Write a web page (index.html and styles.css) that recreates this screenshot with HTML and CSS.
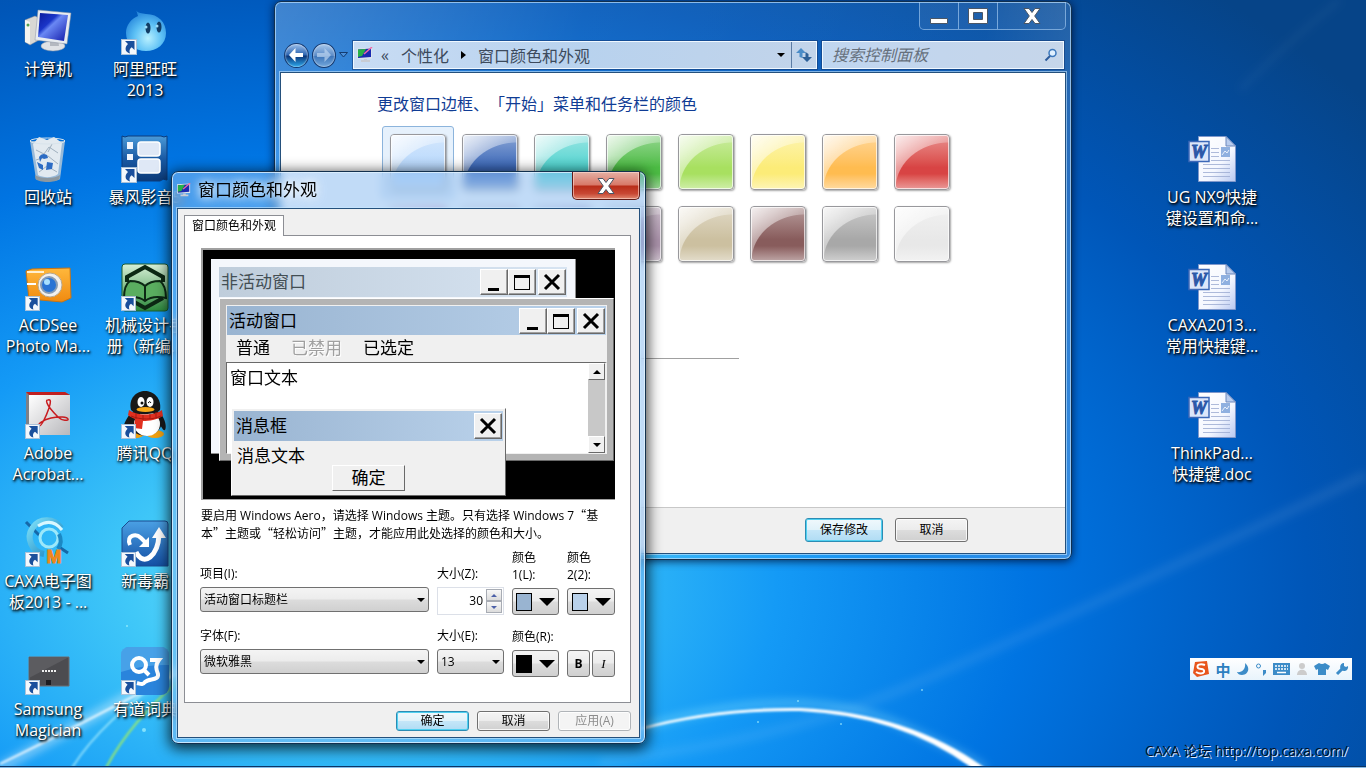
FILE: index.html
```html
<!DOCTYPE html>
<html lang="zh-CN">
<head>
    <meta charset="UTF-8">
    <meta name="viewport" content="width=device-width, initial-scale=1.0">
    <title>窗口颜色和外观</title>
    <link rel="stylesheet" href="styles.css">
</head>
<body>
    <svg class="defs" width="0" height="0" aria-hidden="true">
        <defs>
            <linearGradient id="gScreen" x1="0" y1="0" x2="1" y2="1">
                <stop offset="0" stop-color="#0a1a9c"/><stop offset=".35" stop-color="#1a35c8"/><stop offset=".45" stop-color="#6a88f4"/><stop offset="1" stop-color="#1018a8"/>
            </linearGradient>
            <radialGradient id="gDrop" cx=".55" cy=".7" r=".7">
                <stop offset="0" stop-color="#b8f0ff"/><stop offset=".5" stop-color="#5cc0f5"/><stop offset="1" stop-color="#1f7fd8"/>
            </radialGradient>
            <linearGradient id="gBlue" x1="0" y1="0" x2="0" y2="1">
                <stop offset="0" stop-color="#4aa0e4"/><stop offset="1" stop-color="#1450a4"/>
            </linearGradient>
            <linearGradient id="gFilm" x1="0" y1="0" x2="0" y2="1">
                <stop offset="0" stop-color="#4a9ad8"/><stop offset=".5" stop-color="#1a5aa4"/><stop offset="1" stop-color="#0c3a78"/>
            </linearGradient>
            <linearGradient id="gBook" x1="0" y1="0" x2="0" y2="1">
                <stop offset="0" stop-color="#d8f0d8"/><stop offset="1" stop-color="#2c8a3c"/>
            </linearGradient>
            <linearGradient id="gOrange" x1="0" y1="0" x2="0" y2="1">
                <stop offset="0" stop-color="#ffb83c"/><stop offset="1" stop-color="#f08a10"/>
            </linearGradient>
            <linearGradient id="gPaper" x1="0" y1="0" x2="1" y2="1">
                <stop offset="0" stop-color="#ffffff"/><stop offset=".6" stop-color="#f4f7ff"/><stop offset="1" stop-color="#b8c8f0"/>
            </linearGradient>
            <linearGradient id="gGrey" x1="0" y1="0" x2="1" y2="1">
                <stop offset="0" stop-color="#ffffff"/><stop offset="1" stop-color="#b8b8bc"/>
            </linearGradient>
            <linearGradient id="gCaxa" x1="0" y1="0" x2="1" y2="1">
                <stop offset="0" stop-color="#7ee0f8"/><stop offset="1" stop-color="#1080c0"/>
            </linearGradient>
            <symbol id="arrow" viewBox="0 0 16 16">
                <rect x=".5" y=".5" width="15" height="15" fill="#f4f8fc" stroke="#a8c0d8"/>
                <path d="M4 2h9.500v9l-2.800-2.800C8.500 9.500 8 12 9 14.500 3.500 13 3.500 8 7 5z" fill="#1a4f9c"/>
            </symbol>
            <symbol id="monitor" viewBox="0 0 16 16">
                <path d="M0 1.500L15 .5v11L0 12z" fill="#dce4ec"/>
                <path d="M1 2.500l13-1V10L1 11z" fill="#1a2ab0"/>
                <path d="M1 2.500l8-.5L5 9l-4 1z" fill="#28b048"/>
                <path d="M15 0L7 7" stroke="#f06aa8" stroke-width="1.500"/>
                <path d="M7 12h3v1h3v2H4v-2h3z" fill="#c8ccd4"/>
            </symbol>
            <symbol id="cross" viewBox="0 0 20 18">
                <path d="M2 1.500h5l3 4 3-4h5L12.700 9l5.300 7.500h-5l-3-4-3 4H2L7.300 9z" fill="#fff" stroke="#4a5666" stroke-width="1"/>
            </symbol>
            <symbol id="word" viewBox="0 0 48 48">
                <path d="M10.500.500H38l9.500 9.500v35.500h-37z" fill="url(#gPaper)" stroke="#7f98cc"/>
                <path d="M38 .5v9.500h9.500z" fill="#b8ccee" stroke="#6c88bc"/>
                <path d="M23 12.500h8M23 16.500h8M23 20.500h8M23 24.500h19M15 28.500h27M15 32.500h27M15 36.500h27M15 40.500h27" stroke="#9aaad0" stroke-width=".8"/>
                <rect x="33" y="11" width="9" height="10" fill="#8fb0e0"/>
                <path d="M34 19l3-4 2 2 2-3" stroke="#e8f0fc" fill="none"/>
                <rect x="1" y="5.500" width="20" height="20" fill="#dce6fa" stroke="#3c68b8" stroke-width="1.500"/>
                <text x="11" y="22" class="word-letter">W</text>
            </symbol>
        </defs>
    </svg>

    <div class="desktop">
        <svg class="wallpaper" viewBox="0 0 1366 768" preserveAspectRatio="none" aria-hidden="true">
            <defs>
                <filter id="soft" x="-20%" y="-50%" width="140%" height="200%"><feGaussianBlur stdDeviation="4"/></filter>
                <filter id="edge"><feGaussianBlur stdDeviation="1"/></filter>
            </defs>
            <g fill="none" filter="url(#soft)">
                <path d="M600 762Q780 740 900 690T1366 475" stroke="#fff" stroke-opacity=".08" stroke-width="10"/>
                <path d="M640 728Q800 680 900 725T980 770" stroke="#bff" stroke-opacity=".3" stroke-width="7"/>
                <path d="M1240 90Q1290 40 1340 0" stroke="#fff" stroke-opacity=".04" stroke-width="6"/>
                <path d="M0 768L180 668" stroke="#fff" stroke-opacity=".4" stroke-width="10"/>
            </g>
            <g filter="url(#edge)">
                <path d="M640 729Q715 709 800 710 905 715 976 770H986Q910 714 800 709 715 708 640 729z" fill="#fff" stroke="#fff" stroke-width="2"/>
                <path d="M0 764Q70 730 180 672" fill="none" stroke="#fff" stroke-opacity=".8" stroke-width="2"/>
                <path d="M72 768Q100 722 175 670" fill="none" stroke="#cff" stroke-opacity=".6" stroke-width="2"/>
                <path d="M106 768Q130 722 180 680" fill="none" stroke="#a4f060" stroke-opacity=".9" stroke-width="2"/>
            </g>
            <g fill="#bff" fill-opacity=".6">
                <circle cx="922" cy="690" r="1"/><circle cx="798" cy="701" r="1"/><circle cx="841" cy="724" r="1"/><circle cx="758" cy="722" r="1"/><circle cx="127" cy="626" r="1"/><circle cx="144" cy="730" r="2"/>
            </g>
        </svg>

        <nav class="icons icons-left">
            <a class="shortcut" href="#">
                <svg viewBox="0 0 48 48">
                    <path d="M1 12l10-4 4 2v22l-9 5-5-3z" fill="#d8d8d4" stroke="#8c9098" stroke-width=".5"/>
                    <path d="M1 12l5 2v22l-5-2z" fill="#f4f4f0"/><circle cx="4" cy="17" r="1.500" fill="#50a050"/>
                    <ellipse cx="29" cy="38" rx="12" ry="5" fill="#e0e2e6" stroke="#9098a4" stroke-width=".5"/>
                    <path d="M26 30h8l1 8h-9z" fill="#b4b8c0"/>
                    <path d="M14 2l33 3-4 31-32-4z" fill="#e8ecf0" stroke="#8890a0" stroke-width=".5"/>
                    <path d="M16 5l28 2-4 26-26-4z" fill="url(#gScreen)"/>
                </svg>
                <span>计算机</span>
            </a>
            <a class="shortcut" href="#">
                <svg viewBox="0 0 48 48">
                    <path d="M14 1c3 5 7 4 11 5 13 0 20 9 20 19 0 11-9 18-20 18S5 36 5 25c0-8 5-14 12-17-1-3-1-5-3-7z" fill="url(#gDrop)"/>
                    <ellipse cx="27" cy="20" rx="2.500" ry="5.500" fill="#123c64"/><ellipse cx="38" cy="19" rx="2.500" ry="5.500" fill="#123c64"/>
                    <circle cx="25" cy="19" r="1.500" fill="#9cdcf8"/><circle cx="36" cy="18" r="1.500" fill="#9cdcf8"/>
                    <use href="#arrow" x="0" y="31" width="16" height="16"/>
                </svg>
                <span>阿里旺旺<br>2013</span>
            </a>
            <a class="shortcut" href="#">
                <svg viewBox="0 0 48 48">
                    <path d="M6 5h35l-5 38c-3 3-20 3-24 0z" fill="#b4c8d8" fill-opacity=".85"/>
                    <path d="M9 8l6-7 8 3 7-3 8 6-4 31c-5 4-15 4-20 1z" fill="#e2eaf0"/>
                    <path d="M12 14l8 4 5-7 9 6M12 24l12-4 10 8M15 36l8-6 10 6M28 8l-4 8" stroke="#a0b0be" fill="none"/>
                    <path d="M15 21q3-5 8-2l1 3-4 1-2-1-2 4zM23 26l6 1-1 6-6 1zM13 26l6 3v5l-4-2z" fill="#2c6cc4"/>
                    <ellipse cx="23.500" cy="5" rx="17.500" ry="3" fill="none" stroke="#d8e4ec"/>
                    <path d="M11 39c5 4 20 4 25 0l-.5 4c-4 4-20 4-24 0z" fill="#8c98a0"/>
                </svg>
                <span>回收站</span>
            </a>
            <a class="shortcut" href="#">
                <svg viewBox="0 0 48 48">
                    <path d="M1 0q3 2 6 0h33q3 2 6 0v44q-4-2-7 1H8q-3-2-7 0z" fill="url(#gFilm)" stroke="#0c3c7c"/>
                    <rect x="17" y="6" width="22" height="14" rx="3" fill="#dfe8f6" stroke="#fff" stroke-width="1.500"/>
                    <rect x="17" y="23" width="22" height="14" rx="3" fill="#dfe8f6" stroke="#fff" stroke-width="1.500"/>
                    <path d="M6 6h6v7H6zM6 18h6v6H6z" fill="#f0f6ff"/>
                    <use href="#arrow" x="0" y="31" width="16" height="16"/>
                </svg>
                <span>暴风影音5</span>
            </a>
            <a class="shortcut" href="#">
                <svg viewBox="0 0 48 48">
                    <path d="M2 7l6-2 38-1 1 30-9 4-33-3z" fill="url(#gOrange)" stroke="#c87414"/>
                    <path d="M3 7h17v2H3z" fill="#fff0d0"/>
                    <path d="M3 20h9" stroke="#fff" stroke-width="2"/>
                    <circle cx="26" cy="21" r="12" fill="#f2f0ee" stroke="#b8a890"/>
                    <circle cx="25" cy="21" r="8" fill="#2a74d4" stroke="#889cb4" stroke-width="2"/>
                    <circle cx="23" cy="18" r="3" fill="#a8e0ff"/>
                    <use href="#arrow" x="1" y="32" width="15" height="15"/>
                </svg>
                <span>ACDSee<br>Photo Ma...</span>
            </a>
            <a class="shortcut" href="#">
                <svg viewBox="0 0 48 48">
                    <rect x="1" y="0" width="46" height="47" rx="3" fill="url(#gBook)" stroke="#1c5c30"/>
                    <path d="M6 18v-5L24 3l18 10v5M6 34l18 10 18-10" fill="none" stroke="#0c2814" stroke-width="4"/>
                    <path d="M3 34c0-9 3-15 6-17 6 0 11 1 15 5 4-4 9-5 15-5 4 3 6 8 6 17-9-2-16-1-21 3-5-4-12-5-21-3z" fill="#5aae60" stroke="#0c2814" stroke-width="2"/>
                    <path d="M24 22v14" stroke="#0c2814" stroke-width="2"/>
                    <use href="#arrow" x="0" y="32" width="15" height="15"/>
                </svg>
                <span>机械设计手<br>册（新编...</span>
            </a>
            <a class="shortcut" href="#">
                <svg viewBox="0 0 48 48">
                    <path d="M2 0h39l4 3v40H5l-3-3z" fill="#7c8088"/>
                    <path d="M5 3h41v40H5z" fill="url(#gGrey)"/>
                    <path d="M2 0h39l5 3H5z" fill="#c02020"/>
                    <g fill="none" stroke="#c81c20" stroke-linejoin="round">
                        <path d="M24 8c3-1 3 2 1 8-3 9-8 19-10 18s3-6 12-8 16-1 17 1-6 2-10-2-10-11-11-14 0-3 1-3z" stroke-width="1.500"/>
                    </g>
                    <use href="#arrow" x="1" y="32" width="15" height="15"/>
                </svg>
                <span>Adobe<br>Acrobat...</span>
            </a>
            <a class="shortcut" href="#">
                <svg viewBox="0 0 48 48">
                    <path d="M9 22c-4 5-8 13-6 16 2 1 5-4 7-7zM40 22c4 5 6 13 4 16-2 1-4-4-6-7z" fill="#181818"/>
                    <ellipse cx="15" cy="42" rx="8" ry="4" fill="#f0a010"/><ellipse cx="34" cy="42" rx="9" ry="4" fill="#f0a010"/>
                    <ellipse cx="24.500" cy="29" rx="16.500" ry="15" fill="#181818"/>
                    <ellipse cx="26" cy="32" rx="13" ry="12" fill="#fff"/>
                    <path d="M10 18C7 6 16-1 24-1s17 7 15 19c-5 5-23 6-29 0z" fill="#181818"/>
                    <ellipse cx="20" cy="10" rx="3.500" ry="5" fill="#fff"/><ellipse cx="29" cy="10" rx="3.500" ry="5" fill="#fff"/>
                    <circle cx="21" cy="11" r="1.500" fill="#111"/><path d="M27 11q2-3 3 0" stroke="#111" fill="none"/>
                    <ellipse cx="24.500" cy="17.500" rx="9" ry="2.500" fill="#f8a818"/>
                    <path d="M8 18c8 6 25 6 33 0l1 6c-6 4-14 5-20 5l-1 8-8-1 1-9c-3-1-6-3-7-4z" fill="#e03020"/>
                    <path d="M10 24c9 4 22 4 30 0M15 21v6M22 23v5M29 22v5M35 20v5" stroke="#a81810" fill="none"/>
                    <use href="#arrow" x="0" y="32" width="15" height="15"/>
                </svg>
                <span>腾讯QQ</span>
            </a>
            <a class="shortcut" href="#">
                <svg viewBox="0 0 48 48">
                    <path d="M2 2l13 13M44 33l-9-6" stroke="#1668a8" stroke-width="3"/>
                    <path d="M37 8A17 17 0 1 0 20 34" fill="none" stroke="url(#gCaxa)" stroke-width="6"/>
                    <path d="M14 6Q28-3 38 10" fill="none" stroke="#d8f8ff" stroke-width="3"/>
                    <circle cx="25" cy="18" r="9" fill="none" stroke="#9ce8fa" stroke-width="3"/>
                    <path d="M35 14q4 8-1 15" fill="none" stroke="#1b88c4" stroke-width="4"/>
                    <text x="30" y="43" class="caxa-letter">M</text>
                    <use href="#arrow" x="1" y="32" width="15" height="15"/>
                </svg>
                <span>CAXA电子图<br>板2013 - ...</span>
            </a>
            <a class="shortcut" href="#">
                <svg viewBox="0 0 48 48">
                    <path d="M1 8l7-7h36q3 0 3 3v42H1z" fill="url(#gBlue)" stroke="#1a4c90"/>
                    <path d="M9 25C5 15 15 13 20 18l6 6" fill="none" stroke="#fff" stroke-width="4"/>
                    <path d="M18 27h10V17z" fill="#fff"/>
                    <path d="M15 32c8 16 22 3 23-17" fill="none" stroke="#fff" stroke-width="5"/>
                    <path d="M38 7l7 11H31z" fill="#fff"/>
                    <use href="#arrow" x="0" y="32" width="15" height="15"/>
                </svg>
                <span>新毒霸</span>
            </a>
            <a class="shortcut" href="#">
                <svg viewBox="0 0 48 48">
                    <path d="M5 9h40v29H5z" fill="#4c4c50" stroke="#6c6c70"/>
                    <path d="M5 9h40L5 30z" fill="#5c5c60"/>
                    <path d="M18 23h14" stroke="#f0f0f0" stroke-width="2" stroke-dasharray="2 1"/>
                    <path d="M22 32h5v5h-5z" fill="#1c1c20"/>
                    <use href="#arrow" x="1" y="32" width="15" height="15"/>
                </svg>
                <span>Samsung<br>Magician</span>
            </a>
            <a class="shortcut" href="#">
                <svg viewBox="0 0 48 48">
                    <rect x="0" y="-1" width="48" height="48" rx="8" fill="#2a84dc"/>
                    <path d="M0 24V7q0-8 8-8h32q8 0 8 8v10Q24 16 0 24z" fill="#5cb4f0" fill-opacity=".6"/>
                    <circle cx="18" cy="17" r="7" fill="none" stroke="#fff" stroke-width="4"/>
                    <path d="M23 22l5 5M29 12h9c-4 5-3 9-1 14 1 7-9 4-13 8-2 3-4 2-8 1" fill="none" stroke="#fff" stroke-width="4"/>
                    <use href="#arrow" x="0" y="32" width="15" height="15"/>
                </svg>
                <span>有道词典</span>
            </a>
        </nav>

        <nav class="icons icons-right">
            <a class="shortcut" href="#">
                <svg viewBox="0 0 48 48"><use href="#word" width="48" height="48"/></svg>
                <span>UG NX9快捷<br>键设置和命...</span>
            </a>
            <a class="shortcut" href="#">
                <svg viewBox="0 0 48 48"><use href="#word" width="48" height="48"/></svg>
                <span>CAXA2013...<br>常用快捷键...</span>
            </a>
            <a class="shortcut" href="#">
                <svg viewBox="0 0 48 48"><use href="#word" width="48" height="48"/></svg>
                <span>ThinkPad...<br>快捷键.doc</span>
            </a>
        </nav>

        <!-- control panel window -->
        <section class="window panel-window">
            <div class="caption">
                <div class="caption-buttons">
                    <button class="cap-btn" aria-label="最小化"><svg width="18" height="18"><path d="M.5 11.500h17v5H.5z" fill="#fff" stroke="#4a5666"/></svg></button>
                    <button class="cap-btn" aria-label="最大化"><svg width="20" height="18"><path d="M.5 1.500h19v15H.5zM5.500 5.500v7h9v-7z" fill="#fff" stroke="#4a5666" fill-rule="evenodd"/></svg></button>
                    <button class="cap-btn cap-wide" aria-label="关闭"><svg width="20" height="18"><use href="#cross"/></svg></button>
                </div>
            </div>
            <div class="navbar">
                <div class="travel">
                    <button class="round back" aria-label="后退"><svg width="18" height="18"><path d="M8.500 2L2 9l6.500 7v-5H16V7H8.500z" fill="#fff"/></svg></button>
                    <button class="round forward" aria-label="前进"><svg width="18" height="18"><path d="M9.500 2L16 9l-6.500 7v-5H2V7h7.500z" fill="#bcd4f0" fill-opacity=".7"/></svg></button>
                    <svg width="9" height="6"><path d="M.5.500h8l-4 4.500z" fill="#4a90dc" stroke="#143c70"/></svg>
                </div>
                <div class="address">
                    <svg width="16" height="16"><use href="#monitor"/></svg>
                    <span class="chev">«</span>
                    <a href="#">个性化</a>
                    <svg width="5" height="8"><path d="M0 0l5 4-5 4z"/></svg>
                    <a href="#">窗口颜色和外观</a>
                    <button class="address-drop" aria-label="以前的位置"><svg width="8" height="4"><path d="M0 0h8L4 4z"/></svg></button>
                    <button class="refresh" aria-label="刷新"><svg width="16" height="14"><path d="M5 0L0 5h3.500v4l3 1V5H10z" fill="#4a8cc8"/><path d="M11 14l5-5h-3.500V6l-3-2v5H6z" fill="#2c6098"/></svg></button>
                </div>
                <div class="search">
                    <input type="text" placeholder="搜索控制面板" aria-label="搜索控制面板">
                    <svg width="14" height="14"><circle cx="8.500" cy="5" r="3.500" fill="#e0f0ff" stroke="#3c78bc" stroke-width="1.500"/><path d="M6 8l-4.500 4.500" stroke="#2c5c9c" stroke-width="2"/></svg>
                </div>
            </div>
            <div class="client">
                <div class="panel-body">
                    <h1>更改窗口边框、「开始」菜单和任务栏的颜色</h1>
                    <div class="swatches">
                        <button class="cell selected" aria-label="天空"><span class="swatch sky"></span></button>
                        <button class="cell" aria-label="黄昏"><span class="swatch twilight"></span></button>
                        <button class="cell" aria-label="海洋"><span class="swatch sea"></span></button>
                        <button class="cell" aria-label="叶"><span class="swatch leaf"></span></button>
                        <button class="cell" aria-label="酸橙"><span class="swatch lime"></span></button>
                        <button class="cell" aria-label="太阳"><span class="swatch sun"></span></button>
                        <button class="cell" aria-label="南瓜"><span class="swatch pumpkin"></span></button>
                        <button class="cell" aria-label="红宝石"><span class="swatch ruby"></span></button>
                        <button class="cell" aria-label="紫红"><span class="swatch fuchsia"></span></button>
                        <button class="cell" aria-label="腮红"><span class="swatch blush"></span></button>
                        <button class="cell" aria-label="紫罗兰"><span class="swatch violet"></span></button>
                        <button class="cell" aria-label="淡紫"><span class="swatch lavender"></span></button>
                        <button class="cell" aria-label="灰褐"><span class="swatch taupe"></span></button>
                        <button class="cell" aria-label="巧克力"><span class="swatch chocolate"></span></button>
                        <button class="cell" aria-label="石板"><span class="swatch slate"></span></button>
                        <button class="cell" aria-label="霜"><span class="swatch frost"></span></button>
                    </div>
                    <hr>
                </div>
                <div class="panel-footer">
                    <button class="btn btn-default btn-save">保存修改</button>
                    <button class="btn">取消</button>
                </div>
            </div>
        </section>

        <!-- advanced appearance dialog -->
        <section class="window dialog">
            <div class="caption">
                <svg width="14" height="14"><use href="#monitor"/></svg>
                <h2>窗口颜色和外观</h2>
                <button class="close-red" aria-label="关闭"><svg width="20" height="18"><use href="#cross"/></svg></button>
            </div>
            <div class="client">
                <button class="tab">窗口颜色和外观</button>
                <div class="tab-page">
                    <div class="preview">
                        <div class="mini inactive">
                            <div class="mini-title">
                                <span>非活动窗口</span>
                                <i class="mini-btn"><svg width="22" height="22"><path d="M5 17h11v3H5z"/></svg></i><i class="mini-btn"><svg width="22" height="22"><path d="M3 4h16v15H3zM4 7v11h14V7z" fill-rule="evenodd"/></svg></i><i class="mini-btn mini-close"><svg width="22" height="22"><path d="M4 4l14 14M18 4L4 18" stroke="#000" stroke-width="3"/></svg></i>
                            </div>
                        </div>
                        <div class="mini active">
                            <div class="mini-title">
                                <span>活动窗口</span>
                                <i class="mini-btn"><svg width="22" height="22"><path d="M5 17h11v3H5z"/></svg></i><i class="mini-btn"><svg width="22" height="22"><path d="M3 4h16v15H3zM4 7v11h14V7z" fill-rule="evenodd"/></svg></i><i class="mini-btn mini-close"><svg width="22" height="22"><path d="M4 4l14 14M18 4L4 18" stroke="#000" stroke-width="3"/></svg></i>
                            </div>
                            <div class="mini-menu"><span>普通</span><span class="off">已禁用</span><span>已选定</span></div>
                            <div class="mini-text">
                                <span>窗口文本</span>
                                <div class="mini-scroll">
                                    <i><svg width="8" height="4"><path d="M0 4h8L4 0z"/></svg></i>
                                    <i><svg width="8" height="4"><path d="M0 0h8L4 4z"/></svg></i>
                                </div>
                            </div>
                        </div>
                        <div class="mini message">
                            <div class="mini-title">
                                <span>消息框</span>
                                <i class="mini-btn mini-close"><svg width="22" height="22"><path d="M4 4l14 14M18 4L4 18" stroke="#000" stroke-width="3"/></svg></i>
                            </div>
                            <p>消息文本</p>
                            <button class="mini-ok">确定</button>
                        </div>
                    </div>

                    <p class="note">要启用 Windows Aero，请选择 Windows 主题。只有选择 Windows 7<span class="q">“</span>基<br>本<span class="q">”</span>主题或<span class="q">“</span>轻松访问<span class="q">”</span>主题，才能应用此处选择的颜色和大小。</p>

                    <div class="fields">
                        <div class="field">
                            <label for="item">项目(I):</label>
                            <div class="drop"><select id="item"><option>活动窗口标题栏</option></select></div>
                        </div>
                        <div class="field">
                            <label for="size1">大小(Z):</label>
                            <div class="spin">
                                <input id="size1" type="text" value="30">
                                <div class="steps">
                                    <button aria-label="增加"><svg width="6" height="3"><path d="M0 3h6L3 0z"/></svg></button>
                                    <button aria-label="减少"><svg width="6" height="3"><path d="M0 0h6L3 3z"/></svg></button>
                                </div>
                            </div>
                        </div>
                        <div class="field">
                            <label for="color1">颜色<br>1(L):</label>
                            <button id="color1" class="color"><span class="chip chip-1"></span><svg width="16" height="8"><path d="M0 0h16L8 8z"/></svg></button>
                        </div>
                        <div class="field">
                            <label for="color2">颜色<br>2(2):</label>
                            <button id="color2" class="color"><span class="chip chip-2"></span><svg width="16" height="8"><path d="M0 0h16L8 8z"/></svg></button>
                        </div>
                        <div class="field">
                            <label for="font">字体(F):</label>
                            <div class="drop"><select id="font"><option>微软雅黑</option></select></div>
                        </div>
                        <div class="field">
                            <label for="size2">大小(E):</label>
                            <div class="drop"><select id="size2"><option>13</option></select></div>
                        </div>
                        <div class="field">
                            <label for="color3">颜色(R):</label>
                            <button id="color3" class="color"><span class="chip chip-3"></span><svg width="16" height="8"><path d="M0 0h16L8 8z"/></svg></button>
                        </div>
                        <div class="field styles">
                            <button class="style-btn bold">B</button>
                            <button class="style-btn italic">I</button>
                        </div>
                    </div>
                </div>
                <div class="dialog-footer">
                    <button class="btn btn-default">确定</button>
                    <button class="btn">取消</button>
                    <button class="btn" disabled>应用(A)</button>
                </div>
            </div>
        </section>

        <div class="ime">
            <svg width="18" height="18"><path d="M3 2l12-1 2 13-12 3-4-4z" fill="#e8551c"/><path d="M13 5C8 3 4 5 6 8c2 2 7 0 6 4-1 2-5 2-8 0" fill="none" stroke="#fff" stroke-width="2"/></svg>
            <span>中</span>
            <svg width="14" height="14"><path d="M9 1c6 5 3 12-3 12-3 0-4-1-5-3 5 1 9-3 8-9z" fill="#3c8cc8"/></svg>
            <svg width="12" height="14"><circle cx="3.500" cy="4" r="2" fill="none" stroke="#3c8cc8"/><path d="M8 8h3v3l-3 3V8z" fill="#3c8cc8"/></svg>
            <svg width="18" height="14"><path d="M0 1h17v12H0z" fill="#3c8cc8"/><path d="M2 4h13M2 7h13" stroke="#fff" stroke-width="1.500" stroke-dasharray="2 1"/><path d="M4 10.500h9" stroke="#fff" stroke-width="1.500"/></svg>
            <svg width="12" height="14"><circle cx="6" cy="4" r="3" fill="#ccc"/><path d="M1 13c0-7 10-7 10 0z" fill="#ccc"/></svg>
            <svg width="16" height="14"><path d="M5 1q3 2 6 0l5 3-2 4-2-1v6H4V7L2 8 0 4z" fill="#3c8cc8"/></svg>
            <svg width="15" height="14"><path d="M2 12l6-6" stroke="#3c8cc8" stroke-width="3"/><path d="M13 4a4 4 0 1 1-4-3L9 4l2 1z" fill="#3c8cc8"/></svg>
        </div>
        <a class="forum" href="http://top.caxa.com/">CAXA 论坛 http://top.caxa.com/</a>
        <div class="taskbar"></div>
    </div>
</body>
</html>
```

FILE: styles.css
```css
* {
    box-sizing: border-box;
}
body {
    margin: 0;
    font-family: "Open Sans", "Noto Sans CJK SC", sans-serif;
    font-size: 12px;
    text-spacing-trim: space-all;
    color: #000;
}
button, input, select {
    font: inherit;
    color: inherit;
    margin: 0;
    padding: 0;
}
svg {
    display: block;
    flex: none;
}
h1, h2, p {
    margin: 0;
    font-weight: normal;
}
.defs {
    position: absolute;
}

/* Desktop */
.desktop {
    position: relative;
    min-height: 100vh;
    overflow: hidden;
    display: flex;
    justify-content: space-between;
    align-items: flex-start;
    background: radial-gradient(1000px 620px at 24% 76%, #78e4fb 0%, #40c8f8 20%, #149af6 45%, #0074e2 70%, #0056b8 98%, #064488 130%);
}
.wallpaper {
    position: absolute;
    inset: 0;
    width: 100%;
    height: 100%;
}
.icons {
    position: relative;
    display: grid;
    grid-auto-rows: 128px;
    column-gap: 1px;
}
.icons-left {
    grid-template-columns: 96px 96px;
}
.icons-right {
    grid-template-columns: 96px;
    padding-top: 128px;
    margin-right: 106px;
}
.shortcut {
    display: flex;
    flex-direction: column;
    align-items: center;
    gap: 3px;
    padding-top: 8px;
    color: #fff;
    font-size: 16px;
    line-height: 21px;
    text-align: center;
    text-decoration: none;
    white-space: nowrap;
    text-shadow: 1px 1px 2px #000, 1px 2px 3px rgba(0, 0, 0, 0.8);
}
.shortcut svg {
    width: 48px;
    height: 48px;
    overflow: visible;
}
.word-letter {
    font: italic bold 18px "Liberation Serif", serif;
    fill: #2c58a8;
    stroke: #2c58a8;
    stroke-width: 1px;
    text-anchor: middle;
    text-shadow: none;
}
.caxa-letter {
    font: bold 18px "Liberation Sans", sans-serif;
    fill: #f08818;
    stroke: #f08818;
    stroke-width: 1px;
    text-anchor: middle;
    text-shadow: none;
}

/* Aero windows */
.window {
    position: absolute;
    border: 1px solid #12304e;
    border-radius: 7px;
}
.client {
    border: 1px solid #24507c;
    outline: 1px solid rgba(200, 232, 255, 0.6);
}
.panel-window {
    left: 274px;
    right: 294px;
    top: 1px;
    padding: 0 5px 5px;
    background: linear-gradient(100deg, rgba(255, 255, 255, 0.25), rgba(255, 255, 255, 0.08) 35%, rgba(255, 255, 255, 0.05) 80%, rgba(255, 255, 255, 0.22));
    box-shadow: inset 0 0 0 1px rgba(190, 225, 255, 0.7), 0 1px 8px rgba(0, 10, 40, 0.8);
}
.panel-window .caption {
    display: flex;
    justify-content: flex-end;
    height: 39px;
}
.caption-buttons {
    display: flex;
    height: 28px;
    border: 1px solid rgba(180, 215, 250, 0.6);
    border-top: 0;
    border-radius: 0 0 5px 5px;
    overflow: hidden;
}
.cap-btn {
    display: flex;
    align-items: center;
    justify-content: center;
    width: 39px;
    background: rgba(255, 255, 255, 0.06);
    border: 0;
    border-right: 1px solid rgba(180, 215, 250, 0.6);
}
.cap-wide {
    width: 67px;
    border-right: 0;
}
.navbar {
    display: flex;
    gap: 5px;
    height: 28px;
    margin-bottom: 3px;
}
.travel {
    display: flex;
    align-items: center;
    gap: 3px;
    width: 68px;
    padding-left: 4px;
}
.round {
    display: flex;
    align-items: center;
    justify-content: center;
    width: 25px;
    height: 25px;
    border: 1px solid #163a70;
    border-radius: 50%;
    box-shadow: inset 0 0 2px #fff;
}
.back {
    background: linear-gradient(#9cc0ec, #2c64b0 48%, #0a3478 52%, #2ca8ec);
}
.forward {
    background: linear-gradient(#a8c8ec, #5c8cc8 50%, #3c74b8 52%, #74a8dc);
}
.address, .search {
    display: flex;
    align-items: center;
    border: 1px solid #f0f8ff;
    outline: 1px solid rgba(20, 60, 120, 0.6);
    background: linear-gradient(90deg, #c8dcf4, #b8d2ee 50%, #c2d4ea);
    color: #3c4a5c;
    font-size: 16px;
}
.address {
    flex: 1;
    padding-left: 3px;
}
.address a {
    color: inherit;
    text-decoration: none;
    margin: 0 12px;
}
.address a + svg + a {
    margin: 0 auto 0 12px;
}
.chev {
    margin-left: 8px;
}
.address button {
    display: flex;
    align-items: center;
    justify-content: center;
    height: 100%;
    border: 0;
    background: none;
    width: 25px;
}
.address .address-drop {
    width: 20px;
}
.address .refresh {
    border-left: 1px solid #5c7ca4;
}
.search {
    width: 242px;
    padding: 0 5px 0 9px;
    margin-right: 2px;
    background: linear-gradient(90deg, #c0d6f0, #c6d6ea);
}
.search input {
    flex: 1;
    min-width: 0;
    border: 0;
    background: none;
    font-style: italic;
}
.search input::placeholder {
    color: #66707c;
    opacity: 1;
}
.panel-body {
    min-height: 434px;
    padding: 20px 96px 0;
    background: #fff;
}
.panel-body h1 {
    margin-bottom: 11px;
    color: #103c94;
    font-size: 16px;
    line-height: 22px;
}
.swatches {
    display: grid;
    grid-template-columns: repeat(8, 72px);
    grid-auto-rows: 72px;
    margin-left: 5px;
}
.cell {
    display: flex;
    padding: 7px;
    border: 1px solid transparent;
    border-radius: 3px;
    background: none;
}
.cell.selected {
    border-color: #8cb4dc;
    background: #e6f1fc;
}
.swatch {
    position: relative;
    flex: 1;
    height: 56px;
    overflow: hidden;
    border: 1px solid #98989c;
    border-radius: 4px;
    background: linear-gradient(color-mix(in srgb, var(--tint), #fff 40%), var(--tint) 60%, var(--tint) 72%, color-mix(in srgb, var(--tint), #fff 45%));
    box-shadow: inset 0 0 0 1px rgba(255, 255, 255, 0.7), 1px 1px 2px rgba(0, 0, 0, 0.35);
}
/* curved highlight in the upper left of each colour */
.swatch::before {
    content: "";
    position: absolute;
    inset: 0;
    background: linear-gradient(135deg, rgba(255, 255, 255, 0.85), rgba(255, 255, 255, 0.2) 60%);
    -webkit-mask: radial-gradient(54px 47px at 100% 100%, transparent 98%, #000 100%);
    mask: radial-gradient(54px 47px at 100% 100%, transparent 98%, #000 100%);
}
.sky { --tint: #b8d8fc; }
.twilight { --tint: #3c68b8; }
.sea { --tint: #50d4d0; }
.leaf { --tint: #4cbc44; }
.lime { --tint: #a8e060; }
.sun { --tint: #fcec78; }
.pumpkin { --tint: #ffbc50; }
.ruby { --tint: #d84444; }
.fuchsia { --tint: #e858b0; }
.blush { --tint: #f0b8d0; }
.violet { --tint: #8c60b8; }
.lavender { --tint: #ac94ac; }
.taupe { --tint: #ccc0a0; }
.chocolate { --tint: #885c5c; }
.slate { --tint: #a8a8a8; }
.frost { --tint: #e8e8e8; }
.panel-body hr {
    width: 362px;
    margin: 88px 0 0;
    border: 0;
    border-top: 1px solid #a0a0a0;
}
.panel-footer {
    display: flex;
    justify-content: flex-end;
    gap: 12px;
    padding: 10px 97px 11px 0;
    border-top: 1px solid #c8c8c8;
    background: #f0f0f0;
}
.btn {
    width: 73px;
    height: 20px;
    line-height: 16px;
    border: 1px solid #707070;
    border-radius: 3px;
    background: linear-gradient(#f4f4f4, #ececec 48%, #dcdcdc 52%, #d0d0d0);
    box-shadow: inset 0 0 0 1px rgba(255, 255, 255, 0.8);
}
.panel-footer .btn {
    height: 24px;
}
.btn.btn-save {
    width: 78px;
}
.btn-default {
    border-color: #2c8cb4;
    background: linear-gradient(#f0f8fc, #e0f2fa 48%, #c4e6f8 52%, #b0dcf4);
    box-shadow: inset 0 0 0 1px #50d0f0;
}
.btn:disabled {
    border-color: #b0b4b8;
    background: #f4f4f4;
    color: #8c8c8c;
}

/* Dialog */
.dialog {
    left: 171px;
    top: 171px;
    width: 475px;
    padding: 0 5px 5px;
    background: rgba(136, 186, 240, 0.52);
    backdrop-filter: blur(4px);
    box-shadow: inset 0 0 0 1px rgba(225, 242, 255, 0.8), 0 3px 14px 2px rgba(0, 0, 0, 0.75);
}
.dialog .caption {
    display: flex;
    align-items: center;
    gap: 7px;
    height: 36px;
}
.dialog h2 {
    flex: 1;
    font-size: 17px;
    line-height: 22px;
    text-shadow: 0 0 8px #fff, 0 0 12px #fff;
}
.close-red {
    display: flex;
    align-items: center;
    justify-content: center;
    align-self: flex-start;
    width: 68px;
    height: 28px;
    border: 1px solid #601c18;
    border-top: 0;
    border-radius: 0 0 5px 5px;
    background: linear-gradient(#e4b0a4, #d87868 48%, #b82c18 52%, #c84834 80%, #e08870);
    box-shadow: inset 0 0 0 1px rgba(255, 220, 210, 0.6);
}
.dialog .client {
    padding: 6px 8px 6px 6px;
    background: #f0f0f0;
}
.tab {
    display: block;
    position: relative;
    width: 100px;
    height: 21px;
    margin-bottom: -1px;
    border: 1px solid #8c8e94;
    border-bottom: 0;
    background: #fff;
    line-height: 18px;
}
.tab-page {
    padding: 12px 14px 25px 16px;
    border: 1px solid #8c8e94;
    background: #fff;
}
.preview {
    position: relative;
    height: 252px;
    margin-right: 1px;
    overflow: hidden;
    border: 1px solid #a0a0a0;
    border-width: 2px 0 1px 2px;
    background: #000;
    font-size: 17px;
    line-height: 24px;
}
.mini {
    position: absolute;
}
.mini-title {
    display: flex;
    align-items: center;
    height: 30px;
    padding: 0 1px 0 2px;
}
.mini-title span {
    flex: 1;
}
.mini-btn {
    display: flex;
    align-items: center;
    justify-content: center;
    width: 28px;
    height: 26px;
    border: 1px solid;
    border-color: #fff #696969 #696969 #fff;
    background: #f0f0f0;
    box-shadow: inset -1px -1px #a0a0a0;
}
.mini-close {
    margin-left: 2px;
}
.inactive {
    left: 8px;
    top: 9px;
    width: 365px;
    height: 195px;
    padding: 8px;
    background: #f4f7fc;
    color: #434e54;
    border-right: 1px solid #8c8c8c;
    border-bottom: 1px solid #8c8c8c;
}
.inactive .mini-title {
    background: linear-gradient(90deg, #bfcddb, #d7e4f2);
}
.active {
    left: 16px;
    top: 48px;
    width: 395px;
    padding: 6px;
    border: 1px solid;
    border-color: #fff #696969 #696969 #fff;
    background: #b4b4b4;
}
.active .mini-title {
    border: 1px solid #f0f0f0;
    border-bottom: 0;
    background: linear-gradient(90deg, #99b4d1, #b9d1ea);
}
.mini-menu {
    display: flex;
    gap: 21px;
    padding: 1px 10px 2px;
    background: #f0f0f0;
}
.off {
    color: #a0a0a0;
    text-shadow: 1px 1px #fff;
}
.mini-text {
    display: flex;
    justify-content: space-between;
    height: 92px;
    padding: 0 0 0 3px;
    border: 1px solid;
    border-color: #696969 #f0f0f0 #f0f0f0 #696969;
    border-right-width: 2px;
    background: #fff;
    line-height: 30px;
}
.mini-scroll {
    display: flex;
    flex-direction: column;
    justify-content: space-between;
    width: 17px;
    background: #c8c8c8;
}
.mini-scroll i {
    display: flex;
    align-items: center;
    justify-content: center;
    height: 17px;
    border: 1px solid;
    border-color: #fff #696969 #696969 #fff;
    background: #f0f0f0;
}
.message {
    left: 28px;
    top: 158px;
    width: 275px;
    height: 88px;
    padding: 2px;
    border: 1px solid;
    border-color: #fff #696969 #696969 #fff;
    background: #f0f0f0;
}
.message .mini-title {
    background: linear-gradient(90deg, #99b4d1, #b9d1ea);
}
.message p {
    padding: 3px 3px 0;
}
.mini-ok {
    display: block;
    width: 73px;
    height: 26px;
    margin: -3px 0 0 98px;
    border: 1px solid;
    border-color: #fff #696969 #696969 #fff;
    background: #f0f0f0;
    line-height: 22px;
}
.note {
    margin-top: 6px;
    line-height: 17px;
    white-space: nowrap;
}
.q {
    font-family: "Noto Sans CJK SC", sans-serif;
}
.fields {
    display: grid;
    grid-template-columns: 229px 67px 47px 48px;
    grid-template-rows: 67px auto;
    column-gap: 8px;
    row-gap: 12px;
    margin-top: 6px;
    margin-left: -1px;
}
.field {
    display: flex;
    flex-direction: column;
    justify-content: flex-end;
    gap: 5px;
}
.field label {
    line-height: 17px;
}
.drop {
    position: relative;
    height: 28px;
}
.drop::after {
    content: "";
    position: absolute;
    right: 4px;
    top: 11px;
    border: 4px solid transparent;
    border-top-color: #000;
    border-bottom: 0;
    pointer-events: none;
}
.drop select {
    appearance: none;
    width: 100%;
    height: 25px;
    padding: 0 3px;
    border: 1px solid #707070;
    border-radius: 3px;
    background: linear-gradient(#f4f4f4, #ececec 48%, #dcdcdc 52%, #d0d0d0);
}
.spin {
    display: flex;
    height: 28px;
    padding: 1px;
    border: 1px solid #dce0e8;
}
.spin input {
    flex: 1;
    min-width: 0;
    height: 22px;
    padding-right: 3px;
    border: 0;
    text-align: right;
}
.steps {
    display: flex;
    flex-direction: column;
    width: 16px;
}
.steps button {
    display: flex;
    align-items: center;
    justify-content: center;
    flex: 1;
    border: 1px solid #a8acb4;
    background: linear-gradient(#f8f8f8, #dcdcdc);
    fill: #4c60a8;
}
.color, .style-btn {
    display: flex;
    align-items: center;
    justify-content: center;
    height: 27px;
    border: 1px solid #707070;
    border-radius: 3px;
    background: linear-gradient(#f4f4f4, #ececec 48%, #dcdcdc 52%, #d0d0d0);
}
.color {
    gap: 7px;
}
.chip {
    width: 16px;
    height: 18px;
    border: 1px solid #000;
}
.chip-1 { background: #99b4d1; }
.chip-2 { background: #b9d1ea; }
.chip-3 { background: #000; }
.styles {
    flex-direction: row;
    align-items: flex-end;
    gap: 2px;
}
.style-btn {
    width: 23px;
}
.bold {
    font-weight: bold;
}
.italic {
    font-family: "Liberation Serif", serif;
    font-style: italic;
    font-size: 13px;
}
.dialog-footer {
    display: flex;
    justify-content: flex-end;
    gap: 8px;
    margin-top: 8px;
}

/* Input method bar, forum mark and the hidden taskbar edge */
.ime {
    position: absolute;
    right: 14px;
    bottom: 88px;
    display: flex;
    align-items: center;
    justify-content: space-between;
    width: 162px;
    height: 22px;
    padding: 0 2px;
    background: linear-gradient(#fff, #e8f4fc);
    color: #2c80c0;
    font-size: 15px;
    font-weight: bold;
}
.forum {
    position: absolute;
    right: 18px;
    bottom: 8px;
    color: #001028;
    font-size: 14px;
    line-height: 18px;
    text-decoration: none;
    text-shadow: 1px 1px #dceaff;
}
.taskbar {
    position: absolute;
    left: 0;
    right: 0;
    bottom: 0;
    height: 2px;
    border-top: 1px solid #0c3464;
    background: #88bce8;
}
```
